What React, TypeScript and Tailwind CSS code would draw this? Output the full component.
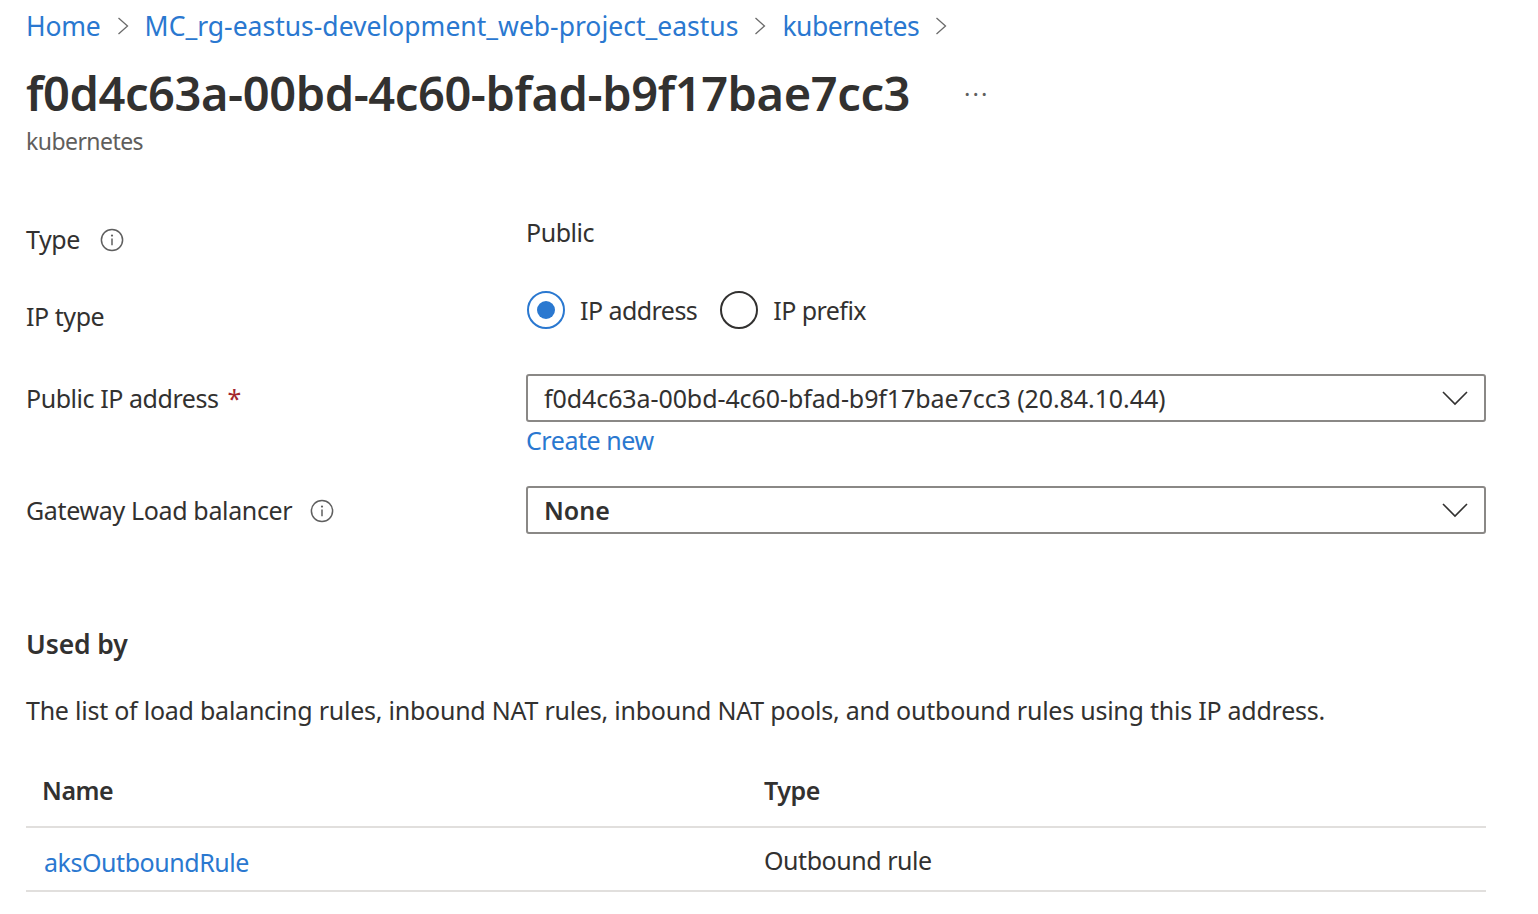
import React from "react";

const Chevron = () => (
  <svg width="14" height="22" viewBox="0 0 14 22" fill="none" className="shrink-0">
    <path d="M2.5 3 L11.5 11 L2.5 19" stroke="#6b6b6b" strokeWidth="1.3" />
  </svg>
);

const Info = () => (
  <svg width="24" height="24" viewBox="0 0 24 24" fill="none" className="mt-[2px] shrink-0">
    <circle cx="12" cy="12" r="10.6" stroke="#5f5f5f" strokeWidth="1.5" />
    <circle cx="12" cy="7.6" r="1.1" fill="#5f5f5f" />
    <path d="M12 10.6 V17.2" stroke="#5f5f5f" strokeWidth="1.5" />
  </svg>
);

const Caret = () => (
  <svg width="28" height="16" viewBox="0 0 28 16" fill="none" className="shrink-0">
    <path d="M2 2 L14 14 L26 2" stroke="#323130" strokeWidth="1.6" />
  </svg>
);

const Select = ({ children }: { children: React.ReactNode }) => (
  <div className="flex h-[48px] w-[960px] items-center justify-between rounded-[3px] border-2 border-[#8a8886] pl-[16px] pr-[15px]">
    {children}
    <Caret />
  </div>
);

export default function App() {
  return (
    <div className="h-[914px] w-[1538px] overflow-hidden bg-white pl-[26px] font-['Noto_Sans',sans-serif] text-[25px] leading-[34px] tracking-[-0.45px] text-[#323130]">
      <div className="mt-[9px] flex h-[34px] items-center text-[26.5px] text-[#2a78d0]">
        <span className="tracking-[-0.2px]">Home</span>
        <span className="ml-[15px] mr-[15px]"><Chevron /></span>
        <span className="tracking-[0px]">MC_rg-eastus-development_web-project_eastus</span>
        <span className="ml-[15px] mr-[15px]"><Chevron /></span>
        <span className="tracking-[-0.45px]">kubernetes</span>
        <span className="mx-[15px]"><Chevron /></span>
      </div>
      <div className="mt-[18px] flex h-[64px] items-center">
        <h1 className="text-[47px] font-semibold leading-[64px] tracking-[-0.42px]">f0d4c63a-00bd-4c60-bfad-b9f17bae7cc3</h1>
        <span className="mb-[12px] ml-[54px] text-[24px] tracking-[2px] text-[#5f5f5f]">...</span>
      </div>
      <div className="-mt-[1px] text-[23px] tracking-[-0.55px] text-[#605e5c]">kubernetes</div>

      <div className="mt-[57px] flex">
        <div className="flex w-[500px] items-center gap-[20px] pt-[7px]">
          <span>Type</span>
          <Info />
        </div>
        <div>Public</div>
      </div>

      <div className="mt-[36px] flex">
        <div className="w-[500px] pt-[7px]">IP type</div>
        <div className="-mt-[1px] ml-[1px] flex items-center self-start">
          <span className="flex h-[38px] w-[38px] items-center justify-center rounded-full border-2 border-[#2a78d0]">
            <span className="h-[18px] w-[18px] rounded-full bg-[#2a78d0]" />
          </span>
          <span className="ml-[15px] tracking-[-0.55px]">IP address</span>
          <span className="ml-[23px] h-[38px] w-[38px] rounded-full border-2 border-[#323130]" />
          <span className="ml-[15px] tracking-[-0.55px]">IP prefix</span>
        </div>
      </div>

      <div className="mt-[41px] flex">
        <div className="w-[500px] pt-[7px]">
          Public IP address <span className="ml-[3px] text-[#a4262c]">*</span>
        </div>
        <div>
          <Select><span className="tracking-[-0.09px]">f0d4c63a-00bd-4c60-bfad-b9f17bae7cc3 (20.84.10.44)</span></Select>
          <div className="mt-[1px] text-[#2a78d0]">Create new</div>
        </div>
      </div>

      <div className="mt-[29px] flex">
        <div className="flex w-[500px] items-center gap-[18px] tracking-[-0.35px]">
          <span>Gateway Load balancer</span>
          <Info />
        </div>
        <Select><span className="font-semibold tracking-[0px]">None</span></Select>
      </div>

      <div className="mt-[93px] text-[26.5px] font-semibold tracking-[-0.1px]">Used by</div>
      <div className="mt-[32px] tracking-[-0.24px]">The list of load balancing rules, inbound NAT rules, inbound NAT pools, and outbound rules using this IP address.</div>

      <div className="mt-[27px] w-[1460px]">
        <div className="flex h-[74px] items-center border-b-2 border-[#e1dfdd] font-semibold">
          <div className="w-[738px] pl-[16px] tracking-[-0.45px]">Name</div>
          <div>Type</div>
        </div>
        <div className="flex h-[64px] items-center border-b-2 border-[#e1dfdd]">
          <div className="w-[738px] pl-[18px] pt-[5px] text-[#2a78d0]">aksOutboundRule</div>
          <div className="pt-[2px]">Outbound rule</div>
        </div>
      </div>
    </div>
  );
}
